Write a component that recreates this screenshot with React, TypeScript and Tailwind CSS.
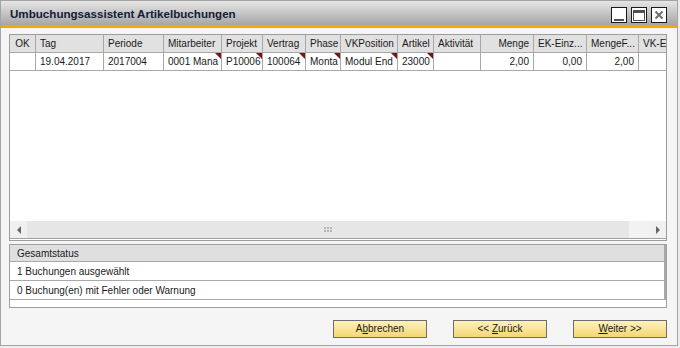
import React from 'react';

// --- DATA ---
type Col = { key: string; label: string; w: number; align?: 'right'; flag?: boolean };

const COLUMNS: Col[] = [
  { key: 'ok', label: 'OK', w: 26 },
  { key: 'tag', label: 'Tag', w: 68 },
  { key: 'periode', label: 'Periode', w: 60 },
  { key: 'mitarbeiter', label: 'Mitarbeiter', w: 58, flag: true },
  { key: 'projekt', label: 'Projekt', w: 41, flag: true },
  { key: 'vertrag', label: 'Vertrag', w: 43, flag: true },
  { key: 'phase', label: 'Phase', w: 35, flag: true },
  { key: 'vkpos', label: 'VKPosition', w: 57, flag: true },
  { key: 'artikel', label: 'Artikel', w: 36, flag: true },
  { key: 'aktiv', label: 'Aktivität', w: 47 },
  { key: 'menge', label: 'Menge', w: 53, align: 'right' },
  { key: 'ek', label: 'EK-Einz...', w: 53, align: 'right' },
  { key: 'mengef', label: 'MengeF...', w: 52, align: 'right' },
  { key: 'vk', label: 'VK-Ei', w: 40 },
];

const ROW: Record<string, string> = {
  ok: '',
  tag: '19.04.2017',
  periode: '2017004',
  mitarbeiter: '0001 Mana',
  projekt: 'P10006',
  vertrag: '100064',
  phase: 'Monta',
  vkpos: 'Modul End',
  artikel: '23000',
  aktiv: '',
  menge: '2,00',
  ek: '0,00',
  mengef: '2,00',
  vk: '',
};

const HEADER_LEFT: Record<string, boolean> = { ek: true, mengef: true };

const WinButton = ({ kind }: { kind: 'min' | 'max' | 'close' }) => (
  <div className="w-[16px] h-[16px] border border-[#1a1a1a] bg-white flex items-center justify-center">
    {kind === 'min' && <div className="w-[10px] h-[2px] bg-[#505050] mt-[9px]" />}
    {kind === 'max' && (
      <div className="w-[12px] h-[11px] border border-[#505050] border-t-[3px]" />
    )}
    {kind === 'close' && (
      <svg width="10" height="10" viewBox="0 0 10 10">
        <path d="M1.5 1.5 L8.5 8.5 M8.5 1.5 L1.5 8.5" stroke="#707070" strokeWidth="2" />
      </svg>
    )}
  </div>
);

const DialogButton = ({ children }: { children: React.ReactNode }) => (
  <button className="w-[94px] h-[18px] border border-[#6e6e6e] bg-gradient-to-b from-[#fdf1bd] to-[#f4d670] text-[10px] text-[#1a1a1a] leading-none flex items-center justify-center">
    <span className="whitespace-pre">{children}</span>
  </button>
);

export default function App() {
  return (
    <div
      className="w-[680px] h-[348px] bg-[#ececec] relative"
      style={{ fontFamily: '"Liberation Sans", Arial, sans-serif' }}
    >
      <div className="w-[678px] h-[346px] border border-[#a4a4a4] bg-[#f5f5f5] flex flex-col">
        {/* --- TITLE BAR --- */}
        <div className="h-[24px] bg-gradient-to-b from-[#e6e6e6] to-[#a6a6a6] flex items-center justify-between pl-[9px] pr-[10px]">
          <span className="text-[11.6px] font-bold text-[#121c38] pt-[2px]">Umbuchungsassistent Artikelbuchungen</span>
          <div className="flex gap-[4px] pt-[4px]">
            <WinButton kind="min" />
            <WinButton kind="max" />
            <WinButton kind="close" />
          </div>
        </div>
        <div className="h-[3px] bg-[#f3a900]" />

        {/* --- BODY --- */}
        <div className="w-[658px] flex flex-col ml-[8px] pt-[6px]">
          {/* GRID */}
          <div className="w-[658px] h-[207px] border border-[#9c9c9c] bg-white flex flex-col">
            <div className="flex h-[18px] bg-[#e1e1e1] border-b border-[#a8a8a8] overflow-hidden shrink-0">
              {COLUMNS.map(c => (
                <div
                  key={c.key}
                  style={{ width: c.w }}
                  className={`shrink-0 h-full border-r border-[#a8a8a8] text-[10px] text-[#1a1a1a] flex items-center px-[4px] whitespace-nowrap overflow-hidden ${c.key === 'ok' ? 'justify-center' : c.align === 'right' && !HEADER_LEFT[c.key] ? 'justify-end' : ''}`}
                >
                  {c.label}
                </div>
              ))}
            </div>
            <div className="flex h-[18px] border-b border-[#a8a8a8] overflow-hidden shrink-0">
              {COLUMNS.map(c => (
                <div
                  key={c.key}
                  style={{ width: c.w }}
                  className={`relative shrink-0 h-full border-r border-[#a8a8a8] text-[10px] text-[#1a1a1a] flex items-center px-[4px] whitespace-nowrap overflow-hidden ${c.align === 'right' ? 'justify-end' : ''}`}
                >
                  {ROW[c.key]}
                  {c.flag && (
                    <div className="absolute top-0 right-0 w-0 h-0 border-l-[6px] border-l-transparent border-t-[6px] border-t-[#7a1414]" />
                  )}
                </div>
              ))}
            </div>
            <div className="flex-1" />

            {/* horizontal scrollbar */}
            <div className="h-[17px] flex bg-[#f0f0f0] shrink-0">
              <div className="w-[17px] flex items-center justify-center">
                <div className="w-0 h-0 border-y-[4px] border-y-transparent border-r-[4px] border-r-[#666666]" />
              </div>
              <div className="w-[602px] bg-[#e6e6e6] flex items-center justify-center">
                <div className="grid grid-cols-3 gap-[1px]">
                  {Array.from({ length: 6 }).map((_, i) => (
                    <div key={i} className="w-[2px] h-[2px] bg-[#b4b4b4]" />
                  ))}
                </div>
              </div>
              <div className="flex-1 bg-[#f2f2f2]" />
              <div className="w-[17px] flex items-center justify-center">
                <div className="w-0 h-0 border-y-[4px] border-y-transparent border-l-[4px] border-l-[#666666]" />
              </div>
            </div>
            <div className="h-[2px] border-t border-[#a0a0a0] bg-white shrink-0" />
          </div>

          {/* STATUS PANEL */}
          <div className="w-[658px] h-[64px] mt-[3px] border border-[#a0a0a0] bg-white flex flex-col">
            <div className="h-[17px] bg-[#dfdfdf] border-b border-r-2 border-[#a8a8a8] flex items-center px-[7px] text-[10px] text-[#1a1a1a]">
              Gesamtstatus
            </div>
            <div className="h-[19px] border-b border-r-2 border-[#a8a8a8] flex items-center px-[7px] text-[10px] text-[#1a1a1a]">
              1 Buchungen ausgewählt
            </div>
            <div className="h-[19px] border-b border-r-2 border-[#a8a8a8] flex items-center px-[7px] text-[10px] text-[#1a1a1a]">
              0 Buchung(en) mit Fehler oder Warnung
            </div>
          </div>

          {/* BUTTONS */}
          <div className="flex justify-end gap-[26px] mt-[12px]">
            <DialogButton>
              A<span className="underline">b</span>brechen
            </DialogButton>
            <DialogButton>
              {'<< '}<span className="underline">Z</span>urück
            </DialogButton>
            <DialogButton>
              <span className="underline">W</span>{'eiter >>'}
            </DialogButton>
          </div>
        </div>
      </div>
    </div>
  );
}
